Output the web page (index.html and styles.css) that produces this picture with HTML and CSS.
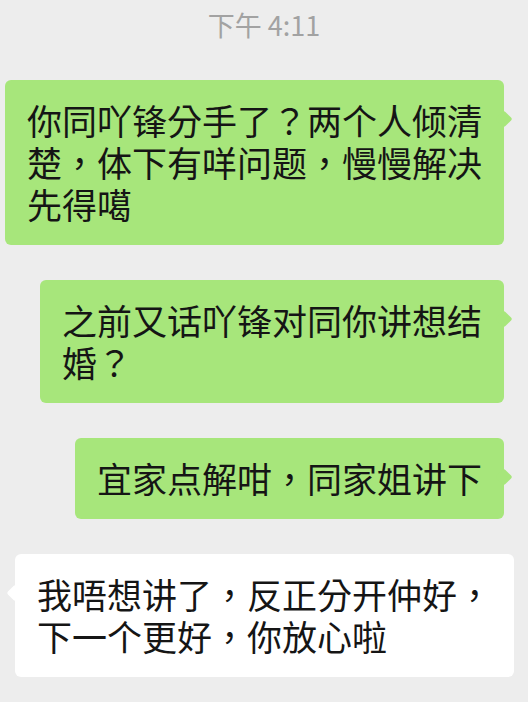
FILE: index.html
```html
<!DOCTYPE html>
<html lang="zh-Hant">
<head>
  <meta charset="UTF-8">
  <title>聊天</title>
  <link rel="stylesheet" href="styles.css">
</head>
<body>
  <div class="chat">
    <div class="time">下午 4:11</div>

    <div class="msg msg-self">
      <div class="bubble">你同吖锋分手了？两个人倾清<br>楚，体下有咩问题，慢慢解决<br>先得噶</div>
    </div>

    <div class="msg msg-self">
      <div class="bubble">之前又话吖锋对同你讲想结<br>婚？</div>
    </div>

    <div class="msg msg-self">
      <div class="bubble">宜家点解咁，同家姐讲下</div>
    </div>

    <!-- 对方 -->
    <div class="msg msg-other">
      <div class="bubble">我唔想讲了，反正分开仲好，<br>下一个更好，你放心啦</div>
    </div>
  </div>
</body>
</html>
```

FILE: styles.css
```css
body {
  margin: 0;
  background: #ededed;
  font-family: "Noto Sans CJK SC", "Noto Sans", sans-serif;
  color: #151515;
}
.chat {
  padding-top: 9px;
}
.time {
  text-align: center;
  font-size: 27px;
  line-height: 32px;
  color: #a2a2a2;
  margin-bottom: 39px;
}
.msg {
  display: flex;
  margin-bottom: 35px;
}
.msg-self {
  justify-content: flex-end;
  padding-right: 24px;
}
.msg-other {
  justify-content: flex-start;
  padding-left: 15px;
}
.bubble {
  position: relative;
  padding: 19px 22px 20px;
  font-size: 35px;
  line-height: 42px;
  border-radius: 6px;
  white-space: nowrap;
}
.msg-self .bubble {
  background: #a7e67b;
}
.msg-other .bubble {
  background: #fff;
}

/* 小三角 */
.bubble::after {
  content: "";
  position: absolute;
  top: 33px;
  width: 12px;
  height: 12px;
  background: inherit;
  border-radius: 2px;
  transform: rotate(45deg);
}
.msg-self .bubble::after {
  right: -6px;
}
.msg-other .bubble::after {
  left: -6px;
}
```
